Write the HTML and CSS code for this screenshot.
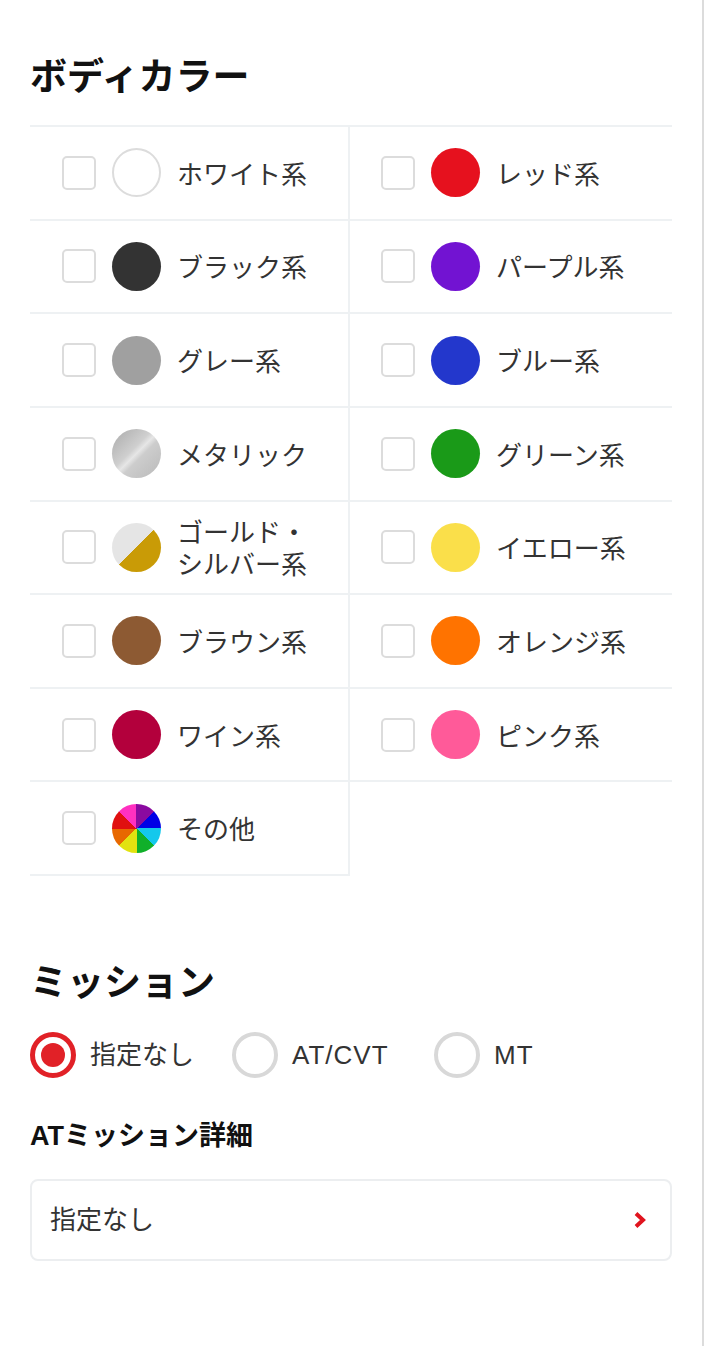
FILE: index.html
```html
<!DOCTYPE html>
<html lang="ja">
<head>
<meta charset="utf-8">
<title>ボディカラー</title>
<link rel="stylesheet" href="styles.css">
</head>
<body>
<div class="page">
  <section class="section">
    <h2 class="title">ボディカラー</h2>
    <ul class="color-grid">
      <li class="cell"><span class="check"></span><span class="swatch sw-white"></span><span class="label">ホワイト系</span></li>
      <li class="cell"><span class="check"></span><span class="swatch sw-red"></span><span class="label">レッド系</span></li>
      <li class="cell"><span class="check"></span><span class="swatch sw-black"></span><span class="label">ブラック系</span></li>
      <li class="cell"><span class="check"></span><span class="swatch sw-purple"></span><span class="label">パープル系</span></li>
      <li class="cell"><span class="check"></span><span class="swatch sw-gray"></span><span class="label">グレー系</span></li>
      <li class="cell"><span class="check"></span><span class="swatch sw-blue"></span><span class="label">ブルー系</span></li>
      <li class="cell"><span class="check"></span><span class="swatch sw-metal"></span><span class="label">メタリック</span></li>
      <li class="cell"><span class="check"></span><span class="swatch sw-green"></span><span class="label">グリーン系</span></li>
      <li class="cell"><span class="check"></span><span class="swatch sw-goldsilver"></span><span class="label">ゴールド・シルバー系</span></li>
      <li class="cell"><span class="check"></span><span class="swatch sw-yellow"></span><span class="label">イエロー系</span></li>
      <li class="cell"><span class="check"></span><span class="swatch sw-brown"></span><span class="label">ブラウン系</span></li>
      <li class="cell"><span class="check"></span><span class="swatch sw-orange"></span><span class="label">オレンジ系</span></li>
      <li class="cell"><span class="check"></span><span class="swatch sw-wine"></span><span class="label">ワイン系</span></li>
      <li class="cell"><span class="check"></span><span class="swatch sw-pink"></span><span class="label">ピンク系</span></li>
      <li class="cell"><span class="check"></span><span class="swatch sw-other"></span><span class="label">その他</span></li>
    </ul>
  </section>

  <section class="section mission">
    <h2 class="title">ミッション</h2>
    <div class="radios">
      <label class="radio"><span class="radio-mark is-on"></span><span class="radio-text">指定なし</span></label>
      <label class="radio"><span class="radio-mark"></span><span class="radio-text latin">AT/CVT</span></label>
      <label class="radio"><span class="radio-mark"></span><span class="radio-text latin">MT</span></label>
    </div>
    <h3 class="subtitle">ATミッション詳細</h3>
    <div class="select">
      <span class="select-text">指定なし</span>
      <svg class="chevron" width="12" height="18" viewBox="0 0 12 18" aria-hidden="true"><polyline points="2,2.5 9,9 2,15.5" fill="none" stroke="#e0141e" stroke-width="4"/></svg>
    </div>
  </section>
</div>
</body>
</html>
```

FILE: styles.css
```css
* { box-sizing: border-box; }

html, body {
  margin: 0;
  padding: 0;
  background: #fff;
}

body {
  font-family: "Liberation Sans", "Noto Sans CJK JP", sans-serif;
  color: #333;
}

.page {
  width: 704px;
  min-height: 1346px;
  padding: 53px 30px 0 30px;
  border-right: 2px solid #dcdcdc;
}

.title {
  margin: 0;
  font-size: 37px;
  line-height: 50px;
  font-weight: 700;
  color: #111;
}

.color-grid {
  list-style: none;
  margin: 22px 0 0;
  padding: 0;
  display: grid;
  grid-template-columns: 320px 1fr;
  border-top: 2px solid #eef1f3;
}

.cell {
  height: 93.625px;
  display: flex;
  align-items: center;
  padding: 0 20px 0 32px;
  border-bottom: 2px solid #eef1f3;
}

.cell:nth-child(odd) {
  border-right: 2px solid #eef1f3;
}

.cell:nth-child(even) {
  padding-left: 31px;
}

.check {
  flex: none;
  width: 34px;
  height: 34px;
  border: 2px solid #dcdcdc;
  border-radius: 5px;
  background: #fff;
}

.swatch {
  flex: none;
  width: 49px;
  height: 49px;
  border-radius: 50%;
  margin-left: 16px;
  margin-right: 16px;
}

.label {
  font-size: 26px;
  line-height: 32px;
  color: #333;
  margin-top: 4px;
}

.sw-white { background: #fff; border: 2px solid #dcdcdc; }
.sw-red { background: #e6111e; }
.sw-black { background: #333; }
.sw-purple { background: #7213d2; }
.sw-gray { background: #a0a0a0; }
.sw-blue { background: #2337cc; }
.sw-metal { background: linear-gradient(135deg, #a9a9a9 0%, #cfcfcf 42%, #e6e6e6 50%, #cdcdcd 58%, #b9b9b9 100%); }
.sw-green { background: #1a9a18; }
.sw-goldsilver { background: linear-gradient(135deg, #e5e5e5 50%, #c99b06 50%); }
.sw-yellow { background: #fadf4a; }
.sw-brown { background: #8d5a33; }
.sw-orange { background: #ff7300; }
.sw-wine { background: #b3003c; }
.sw-pink { background: #ff5a99; }
.sw-other {
  background: conic-gradient(#8a0aa0 0deg 45deg, #0000e6 45deg 90deg, #14c8ec 90deg 135deg, #10b02a 135deg 180deg, #e2e210 180deg 225deg, #e86800 225deg 270deg, #e01010 270deg 315deg, #ff30c0 315deg 360deg);
}

.mission {
  margin-top: 83px;
}

.radios {
  display: grid;
  grid-template-columns: 202px 202px 1fr;
  margin-top: 23px;
}

.radio {
  display: flex;
  align-items: center;
  gap: 14px;
}

.radio-mark {
  flex: none;
  width: 46px;
  height: 46px;
  border-radius: 50%;
  border: 4px solid #d8d8d8;
  background: #fff;
  display: flex;
  align-items: center;
  justify-content: center;
}

.radio-mark.is-on {
  border: 5px solid #e12127;
}

.radio-mark.is-on::after {
  content: "";
  width: 24px;
  height: 24px;
  border-radius: 50%;
  background: #e12127;
}

.radio-text {
  font-size: 26px;
  line-height: 32px;
  color: #333;
}

.radio-text.latin {
  letter-spacing: 1px;
}

.subtitle {
  margin: 38px 0 0;
  font-size: 27px;
  line-height: 40px;
  font-weight: 700;
  color: #111;
}

.select {
  margin-top: 23px;
  height: 82px;
  border: 2px solid #eceef0;
  border-radius: 8px;
  display: flex;
  align-items: center;
  justify-content: space-between;
  padding: 0 24px 0 18px;
}

.select-text {
  font-size: 26px;
  line-height: 32px;
  color: #333;
}

.chevron {
  display: block;
}
```
